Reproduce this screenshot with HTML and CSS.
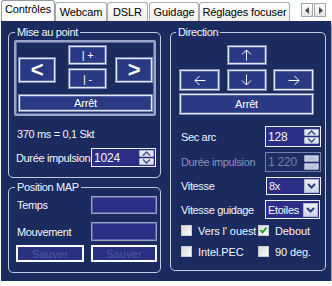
FILE: index.html
```html
<!DOCTYPE html>
<html lang="fr">
<head>
<meta charset="UTF-8" />
<meta name="viewport" content="width=device-width, initial-scale=1" />
<title>Contrôles</title>
<link rel="stylesheet" href="styles.css">
</head>
<body>

<div class="tabs">
  <div class="tab active t-ctrl">Contrôles</div>
  <div class="tab t-webcam">Webcam</div>
  <div class="tab t-dslr">DSLR</div>
  <div class="tab t-guide">Guidage</div>
  <div class="tab t-focus">Réglages focuser</div>
  <div class="tab-scroll">
    <span><svg width="5" height="7" viewBox="0 0 5 7"><polygon points="4,0 4,7 0,3.5" fill="#4a4a4a"/></svg></span>
    <span><svg width="5" height="7" viewBox="0 0 5 7"><polygon points="1,0 1,7 5,3.5" fill="#4a4a4a"/></svg></span>
  </div>
</div>

<div class="panel">
  <div class="col col-left">
    <fieldset class="group g-focus">
      <legend>Mise au point</legend>
      <div class="focus-frame">
        <button class="btn big b-left">&lt;</button>
        <button class="btn b-plus">|&nbsp;+</button>
        <button class="btn big b-right">&gt;</button>
        <button class="btn b-minus">|&nbsp;-</button>
        <button class="btn b-stop">Arrêt</button>
      </div>
      <div class="info">370 ms = 0,1 Skt</div>
      <div class="row r-pulse">
        <label>Durée impulsion</label>
        <div class="spin s-left">
          <span class="val">1024</span>
          <span class="spin-btns">
            <i><svg width="9" height="5" viewBox="0 0 9 5"><polyline points="1,4.5 4.5,1 8,4.5" fill="none" stroke="#3c4f86" stroke-width="1.4"/></svg></i>
            <i><svg width="9" height="5" viewBox="0 0 9 5"><polyline points="1,0.5 4.5,4 8,0.5" fill="none" stroke="#3c4f86" stroke-width="1.4"/></svg></i>
          </span>
        </div>
      </div>
    </fieldset>

    <fieldset class="group g-map">
      <legend>Position MAP</legend>
      <div class="row r-temps">
        <label>Temps</label>
        <div class="box"></div>
      </div>
      <div class="row r-move">
        <label>Mouvement</label>
        <div class="box"></div>
      </div>
      <div class="save-row">
        <button class="save s1">Sauver</button>
        <button class="save s2">Sauver</button>
      </div>
    </fieldset>
  </div>

  <div class="col col-right">
    <fieldset class="group g-dir">
      <legend>Direction</legend>
      <div class="dir-grid">
        <button class="btn d-up"><svg width="11" height="12" viewBox="0 0 11 12"><path d="M5.5 11.5V1M1 5.5L5.5 1L10 5.5" fill="none" stroke="#fff" stroke-width="1"/></svg></button>
        <button class="btn d-left"><svg width="12" height="11" viewBox="0 0 12 11"><path d="M11.5 5.5H1M5.5 1L1 5.5L5.5 10" fill="none" stroke="#fff" stroke-width="1"/></svg></button>
        <button class="btn d-down"><svg width="11" height="12" viewBox="0 0 11 12"><path d="M5.5 0.5V11M1 6.5L5.5 11L10 6.5" fill="none" stroke="#fff" stroke-width="1"/></svg></button>
        <button class="btn d-right"><svg width="12" height="11" viewBox="0 0 12 11"><path d="M0.5 5.5H11M6.5 1L11 5.5L6.5 10" fill="none" stroke="#fff" stroke-width="1"/></svg></button>
        <button class="btn d-stop">Arrêt</button>
      </div>

      <div class="row r-sec">
        <label>Sec arc</label>
        <div class="spin s-right">
          <span class="val">128</span>
          <span class="spin-btns">
            <i><svg width="9" height="5" viewBox="0 0 9 5"><polyline points="1,4.5 4.5,1 8,4.5" fill="none" stroke="#3c4f86" stroke-width="1.4"/></svg></i>
            <i><svg width="9" height="5" viewBox="0 0 9 5"><polyline points="1,0.5 4.5,4 8,0.5" fill="none" stroke="#3c4f86" stroke-width="1.4"/></svg></i>
          </span>
        </div>
      </div>
      <div class="row r-dur disabled">
        <label>Durée impulsion</label>
        <div class="spin s-right">
          <span class="val">1 220</span>
          <span class="spin-btns">
            <i><svg width="9" height="5" viewBox="0 0 9 5"><polyline points="1,4.5 4.5,1 8,4.5" fill="none" stroke="#b4bdd4" stroke-width="1.4"/></svg></i>
            <i><svg width="9" height="5" viewBox="0 0 9 5"><polyline points="1,0.5 4.5,4 8,0.5" fill="none" stroke="#b4bdd4" stroke-width="1.4"/></svg></i>
          </span>
        </div>
      </div>
      <div class="row r-speed">
        <label>Vitesse</label>
        <div class="select">
          <span class="val">8x</span>
          <span class="drop"><svg width="9" height="6" viewBox="0 0 9 6"><polyline points="1,1 4.5,4.5 8,1" fill="none" stroke="#2b3d7f" stroke-width="2"/></svg></span>
        </div>
      </div>
      <div class="row r-guide">
        <label>Vitesse guidage</label>
        <div class="select sel-guide">
          <span class="val">Etoiles</span>
          <span class="drop"><svg width="9" height="6" viewBox="0 0 9 6"><polyline points="1,1 4.5,4.5 8,1" fill="none" stroke="#2b3d7f" stroke-width="2"/></svg></span>
        </div>
      </div>

      <div class="checks">
        <div class="check"><span class="cb"></span>Vers l' ouest</div>
        <div class="check"><span class="cb"><svg width="9" height="9" viewBox="0 0 9 9"><polyline points="1.5,4 3.5,6.5 7.5,1.5" fill="none" stroke="#21a321" stroke-width="2"/></svg></span>Debout</div>
        <div class="check"><span class="cb"></span>Intel.PEC</div>
        <div class="check"><span class="cb"></span>90 deg.</div>
      </div>
    </fieldset>
  </div>
</div>

</body>
</html>
```

FILE: styles.css
```css
/* onglets façon XP sur un panneau bleu nuit */
body {
  margin: 0;
  background: #fff;
  font-family: 'Liberation Sans', Arial, sans-serif;
  font-size: 11px;
  color: #000;
}
button {
  font-family: inherit;
  margin: 0;
  padding: 0;
  cursor: pointer;
}

/* barre d'onglets */
.tabs {
  display: flex;
  align-items: flex-end;
  height: 21px;
}
.tab {
  box-sizing: border-box;
  height: 19px;
  border: 1px solid #a4acb6;
  border-bottom: none;
  border-radius: 3px 3px 0 0;
  background: linear-gradient(#fefefe, #efeee8);
  text-align: center;
  line-height: 18px;
  white-space: nowrap;
  letter-spacing: -0.1px;
}
.tab.active {
  height: 21px;
  background: #fff;
  border-color: #919b9c;
  line-height: 17px;
}
.t-ctrl { margin-left: 1px; width: 54px; }
.t-webcam { width: 52px; }
.t-dslr { width: 41px; }
.t-guide { margin-left: 1px; width: 50px; }
.t-focus { width: 91px; }
.tab-scroll {
  align-self: flex-start;
  margin: 3px 6px 0 auto;
  display: flex;
}
.tab-scroll span {
  box-sizing: border-box;
  width: 12px;
  height: 14px;
  border: 1px solid #a0a6b0;
  background: linear-gradient(#fdfdfd, #e6e6e0);
  display: flex;
  align-items: center;
  justify-content: center;
}
.tab-scroll span + span { margin-left: 1px; }

/* panneau */
.panel {
  box-sizing: border-box;
  margin-left: 1px;
  width: 330px;
  height: 260px;
  background: #1b2a5f;
  box-shadow: 2px 3px 3px rgba(0,0,0,0.45);
  padding: 5px 5px 0 7px;
  display: flex;
  gap: 9px;
  color: #f4f6fc;
  letter-spacing: -0.35px;
}
.col {
  display: flex;
  flex-direction: column;
  gap: 3px;
}
.col-left { width: 153px; }
.col-right { width: 156px; }

.group {
  box-sizing: border-box;
  margin: 0;
  border: 1px solid #c3c9dc;
  border-radius: 5px;
  padding: 0 3px 0 5px;
  min-width: 0;
}
.group legend {
  padding: 0 2px;
  margin-left: 1px;
  line-height: 13px;
}
.g-focus { height: 152px; }
.g-map { height: 92px; }
.g-dir { height: 245px; padding: 0 4px 0 5px; }
.g-dir legend { margin-left: 0; }

/* boutons bleus en relief */
.btn {
  box-sizing: border-box;
  background: #2a3984;
  border: 1px solid #7f8ab8;
  box-shadow: inset 0 0 0 1px #e4e8f6, inset 0 0 0 2px #53629f;
  color: #fff;
  font-size: 11px;
  letter-spacing: -0.2px;
  display: flex;
  align-items: center;
  justify-content: center;
}
.btn.big {
  font-size: 22px;
  font-weight: bold;
  line-height: 1;
}

.focus-frame {
  box-sizing: border-box;
  margin: 1px 1px 0 0;
  height: 76px;
  border: 2px solid #9ca5c6;
  box-shadow: inset 0 0 0 1px #5e6ca3;
  border-radius: 2px;
  padding: 3px 1px 2px 2px;
  display: grid;
  grid-template-columns: 50px 47px 38px;
  grid-template-rows: 20px 21px 18px;
  row-gap: 3px;
}
.b-left { grid-column: 1; grid-row: 1 / 3; width: 38px; height: 26px; align-self: end; margin-bottom: 6px; }
.b-right { grid-column: 3; grid-row: 1 / 3; width: 38px; height: 26px; align-self: end; margin-bottom: 6px; }
.b-plus { grid-column: 2; grid-row: 1; width: 39px; }
.b-minus { grid-column: 2; grid-row: 2; width: 39px; }
.b-stop { grid-column: 1 / 4; grid-row: 3; margin-top: 2px; height: 18px; }

.info {
  margin-top: 12px;
  padding-left: 3px;
  line-height: 13px;
}

/* lignes label + champ */
.row {
  display: flex;
  align-items: center;
  justify-content: space-between;
  white-space: nowrap;
}
.row label { padding-left: 3px; }
.r-pulse { margin-top: 7px; }
.r-pulse label { padding-left: 2px; }

.spin {
  box-sizing: border-box;
  height: 19px;
  border: 1px solid #eef0f8;
  background: #2c2e86;
  display: flex;
  align-items: center;
  justify-content: space-between;
  padding-left: 2px;
  font-size: 12px;
  letter-spacing: -0.2px;
}
.s-left { width: 65px; margin-right: 1px; }
.s-right { width: 56px; }
.spin-btns {
  display: flex;
  flex-direction: column;
  gap: 1px;
  width: 15px;
  height: 15px;
  margin-right: 1px;
}
.spin-btns i {
  flex: 1;
  background: linear-gradient(#eef0f6, #d3d8e6);
  border: 1px solid #aeb6cf;
  border-radius: 1px;
  display: flex;
  align-items: center;
  justify-content: center;
}

/* position MAP */
.r-temps { margin-top: 2px; }
.r-move { margin-top: 8px; }
.box {
  box-sizing: border-box;
  width: 66px;
  height: 18px;
  background: #2c2e86;
  border: 1px solid #9aa1c2;
  box-shadow: inset 0 0 0 1px #5b63a8;
}
.r-move .box { height: 19px; }
.save-row {
  margin-top: 4px;
  display: flex;
  justify-content: space-between;
}
.save {
  box-sizing: border-box;
  height: 17px;
  background: #2a3182;
  border: 2px solid #fbfbff;
  color: #4d5a9c;
  font-size: 11px;
  letter-spacing: 0.2px;
}
.s1 { width: 68px; margin-left: 2px; }
.s2 { width: 66px; }

/* direction */
.dir-grid {
  margin: 6px 7px 0 3px;
  display: grid;
  grid-template-columns: 41px 40px 41px;
  grid-template-rows: 20px 22px 20px;
  row-gap: 4px;
  justify-content: space-between;
}
.d-up { grid-column: 2; grid-row: 1; }
.d-left { grid-column: 1; grid-row: 2; }
.d-down { grid-column: 2; grid-row: 2; }
.d-right { grid-column: 3; grid-row: 2; }
.d-stop { grid-column: 1 / 4; grid-row: 3; margin-top: -2px; }

.g-dir .row label { padding-left: 5px; }
.r-sec { margin-top: 11px; }
.r-sec .spin { height: 21px; }
.r-dur { margin-top: 5px; }
.r-dur .spin { height: 20px; }
.r-speed { margin-top: 5px; }
.r-guide { margin-top: 5px; }

.disabled label { color: #8790b6; }
.disabled .spin {
  background: #1e2c66;
  border-color: #7480ac;
  color: #7480ac;
}
.disabled .spin-btns i {
  background: #c6cce0;
  border-color: #98a2c4;
}

.select {
  box-sizing: border-box;
  width: 55px;
  height: 18px;
  border: 1px solid #eef0f8;
  background: #2c2e86;
  display: flex;
  align-items: center;
  justify-content: space-between;
  padding-left: 2px;
  font-size: 11px;
  letter-spacing: -0.3px;
}
.sel-guide { height: 19px; margin-right: 1px; }
.drop {
  box-sizing: border-box;
  flex: none;
  width: 15px;
  height: 14px;
  margin-right: 1px;
  background: linear-gradient(#eef0f6, #cdd3e3);
  border: 1px solid #aeb6cf;
  display: flex;
  align-items: center;
  justify-content: center;
}

/* cases à cocher */
.checks {
  margin: 5px 0 0 5px;
  display: grid;
  grid-template-columns: 77px auto;
  row-gap: 8px;
  font-size: 11px;
  letter-spacing: -0.1px;
}
.check {
  display: flex;
  align-items: center;
  height: 13px;
  white-space: nowrap;
}
.cb {
  box-sizing: border-box;
  flex: none;
  width: 11px;
  height: 11px;
  margin-right: 6px;
  background: linear-gradient(135deg, #dcdcd6, #fbfbf8);
  border: 1px solid #c9cbd4;
  display: flex;
  align-items: center;
  justify-content: center;
}
```
